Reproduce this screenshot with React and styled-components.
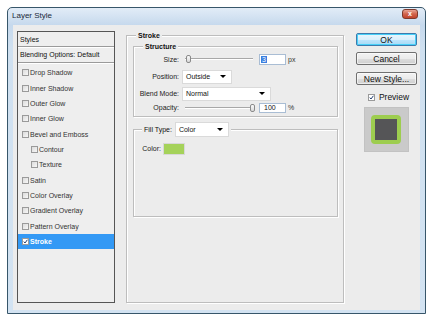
import styled, { createGlobalStyle } from 'styled-components'

const GlobalStyle = createGlobalStyle`
  html, body { margin: 0; padding: 0; background: #fff; }
  body { font-family: "Liberation Sans", Arial, sans-serif; color: #111; }
  * { box-sizing: border-box; }
`

const BG = '#ececec'

const Window = styled.div`
  margin: 7px 0 0 7px;
  width: 419px;
  height: 307px;
  border: 1px solid #37566a;
  border-radius: 5px 5px 0 0;
  padding: 0 5px 3px;
  background: linear-gradient(#e2ecf7, #c6d9ed 17px, #cfe0f0 40px, #d3e3f2);
  display: flex;
  flex-direction: column;
`

const TitleBar = styled.div`
  height: 17px;
  display: flex;
  align-items: flex-start;
  justify-content: space-between;
  flex-shrink: 0;
`

const Title = styled.div`
  margin: 4px 0 0 -1px;
  font-size: 8px;
  line-height: 8px;
  color: #1b2a3a;
`

const CloseBtn = styled.div`
  margin: 1px 2px 0 0;
  width: 16px;
  height: 10px;
  border: 1px solid #7e3a2c;
  border-radius: 3px;
  background: linear-gradient(#e9a494, #d1644c 50%, #c2432c);
  color: #fff;
  font-size: 7px;
  font-weight: bold;
  line-height: 8px;
  text-align: center;
`

const Client = styled.div`
  flex: 1;
  background: ${BG};
  display: flex;
  align-items: flex-start;
  padding: 6px 3px 0 4px;
`

const ListBox = styled.div`
  width: 98px;
  height: 272px;
  border: 1px solid #555;
  background: #eeeeee;
  display: flex;
  flex-direction: column;
  font-size: 7px;
`

const HeaderRow = styled.div`
  height: ${p => p.h}px;
  flex-shrink: 0;
  display: flex;
  align-items: center;
  padding-left: 2px;
  border-bottom: 1px solid #9a9a9a;
  box-shadow: 0 1px 0 #fff;
`

const Items = styled.div`
  margin-top: 2px;
  display: flex;
  flex-direction: column;
`

const Item = styled.div`
  height: 15.36px;
  display: flex;
  align-items: center;
  gap: 1px;
  padding-left: ${p => (p.indent ? 13 : 4)}px;
  background: ${p => (p.selected ? '#3399f5' : 'transparent')};
  color: ${p => (p.selected ? '#fff' : '#333')};
  font-weight: ${p => (p.selected ? 'bold' : 'normal')};
`

const Box = styled.span`
  width: ${p => p.size}px;
  height: ${p => p.size}px;
  flex-shrink: 0;
  border: 1px solid #9a9a9a;
  background: ${p => (p.checked ? '#fff' : 'linear-gradient(135deg, #dcdcdc, #f7f7f7)')};
  display: flex;
  align-items: center;
  justify-content: center;
`

function CheckBox({ checked, size = 7 }) {
  return (
    <Box checked={checked} size={size}>
      {checked && (
        <svg width={size - 2} height={size - 2} viewBox="0 0 10 10">
          <path d="M1.5 5.2 L4 8 L8.8 1.5" fill="none" stroke="#233e70" strokeWidth="2" />
        </svg>
      )}
    </Box>
  )
}

const Group = styled.fieldset`
  margin: ${p => p.m || '0'};
  padding: ${p => p.pad || '0'};
  height: ${p => (p.h ? `${p.h}px` : 'auto')};
  width: ${p => (p.w ? `${p.w}px` : 'auto')};
  border: 1px solid #bdbdbd;
  box-shadow: inset 1px 1px 0 #fff, 1px 1px 0 #fff;
  min-inline-size: 0;
  flex-shrink: 0;
`

const Legend = styled.legend`
  margin-left: ${p => p.ml}px;
  padding: 0 2px;
  background: ${BG};
  font-size: 7px;
  line-height: 9px;
  font-weight: ${p => (p.bold ? 'bold' : 'normal')};
  display: flex;
  align-items: center;
  gap: 3px;
`

const Row = styled.div`
  height: ${p => p.h}px;
  margin-top: ${p => p.mt}px;
  display: flex;
  align-items: center;
  font-size: 7px;
`

const Label = styled.span`
  width: ${p => p.w}px;
  text-align: right;
  flex-shrink: 0;
  color: #222;
`

const SliderTrack = styled.div`
  position: relative;
  margin-left: 6px;
  width: 70px;
  height: 10px;
  &::before {
    content: '';
    position: absolute;
    left: 0;
    right: 2px;
    top: 4px;
    height: 1px;
    background: #a8a8a8;
    box-shadow: 0 1px 0 #fff;
  }
`

const Thumb = styled.span`
  position: absolute;
  top: 1px;
  left: ${p => p.left}px;
  width: 5px;
  height: 8px;
  border: 1px solid #8a8a8a;
  border-radius: 2px;
  background: linear-gradient(#fafafa, #d8d8d8);
`

const NumInput = styled.div`
  margin-left: 4px;
  width: 27px;
  height: ${p => p.h}px;
  border: 1px solid #a9bdd4;
  background: #fff;
  display: flex;
  align-items: center;
  padding-left: ${p => p.pl}px;
  font-size: 7px;
`

const Sel = styled.span`
  background: #3b7fe0;
  color: #fff;
  padding: 0 1px;
`

const Unit = styled.span`
  margin-left: 2px;
  font-size: 7px;
  color: #333;
`

const Select = styled.div`
  margin-left: ${p => p.ml}px;
  width: ${p => p.w}px;
  height: ${p => p.h}px;
  background: #fff;
  border: 1px solid #dadada;
  display: flex;
  align-items: center;
  justify-content: space-between;
  padding: 0 5px 0 3px;
  font-size: 7px;
  font-weight: normal;
  &::after {
    content: '';
    border-left: 3px solid transparent;
    border-right: 3px solid transparent;
    border-top: 3px solid #000;
  }
`

const Swatch = styled.div`
  margin-left: 2px;
  width: 22px;
  height: 12px;
  background: ${p => p.color};
  border: 1px solid #d8d8d8;
`

const Side = styled.div`
  margin-left: 12px;
  padding-top: 2px;
  width: 61px;
  display: flex;
  flex-direction: column;
  align-items: center;
`

const Button = styled.div`
  width: 61px;
  height: 13px;
  margin-top: ${p => p.mt}px;
  border: 1px solid ${p => (p.primary ? '#3d7bad' : '#707070')};
  border-radius: 2px;
  background: ${p =>
    p.primary
      ? 'linear-gradient(#eaf6fd, #d9f0fc 50%, #bee6fd 51%, #a7d9f5)'
      : 'linear-gradient(#f2f2f2, #ebebeb 50%, #dddddd 51%, #cfcfcf)'};
  box-shadow: inset 0 0 0 1px ${p => (p.primary ? '#48d0f8' : 'rgba(255,255,255,0.6)')};
  display: flex;
  align-items: center;
  justify-content: center;
  font-size: 8.5px;
  color: #111;
`

const PreviewRow = styled.div`
  margin-top: 6px;
  height: 12px;
  display: flex;
  align-items: center;
  gap: 4px;
  font-size: 8.5px;
  padding-left: 4px;
`

const PreviewBox = styled.div`
  margin-top: 4px;
  margin-left: -1px;
  width: 45px;
  height: 45px;
  background: #cacaca;
  border: 1px solid #c2c2c2;
  display: flex;
  align-items: center;
  justify-content: center;
`

const PreviewShape = styled.div`
  width: 30px;
  height: 29px;
  border-radius: 4px;
  border: 4px solid #9dcd4f;
  background: #555557;
`

const LAYERS = [
  { label: 'Drop Shadow' },
  { label: 'Inner Shadow' },
  { label: 'Outer Glow' },
  { label: 'Inner Glow' },
  { label: 'Bevel and Emboss' },
  { label: 'Contour', indent: true },
  { label: 'Texture', indent: true },
  { label: 'Satin' },
  { label: 'Color Overlay' },
  { label: 'Gradient Overlay' },
  { label: 'Pattern Overlay' },
  { label: 'Stroke', checked: true, selected: true },
]

export default function App() {
  return (
    <>
      <GlobalStyle />
      <Window>
        <TitleBar>
          <Title>Layer Style</Title>
          <CloseBtn>x</CloseBtn>
        </TitleBar>
        <Client>
          <ListBox>
            <HeaderRow h={15}>Styles</HeaderRow>
            <HeaderRow h={16}>Blending Options: Default</HeaderRow>
            <Items>
              {LAYERS.map(l => (
                <Item key={l.label} indent={l.indent} selected={l.selected}>
                  <CheckBox checked={l.checked} />
                  <span>{l.label}</span>
                </Item>
              ))}
            </Items>
          </ListBox>

          <Group m="0 0 0 11px" pad="2px 5px 0 6px" w={218} h={272}>
            <Legend ml={3} bold>Stroke</Legend>
            <Group pad="0 0 3px 0">
              <Legend ml={9} bold>Structure</Legend>
              <Row h={12} mt={2}>
                <Label w={45}>Size:</Label>
                <SliderTrack>
                  <Thumb left={1} />
                </SliderTrack>
                <NumInput h={11} pl={1}><Sel>3</Sel></NumInput>
                <Unit>px</Unit>
              </Row>
              <Row h={15} mt={4}>
                <Label w={45}>Position:</Label>
                <Select ml={3} w={50} h={14}>Outside</Select>
              </Row>
              <Row h={15} mt={2}>
                <Label w={45}>Blend Mode:</Label>
                <Select ml={3} w={89} h={14}>Normal</Select>
              </Row>
              <Row h={11} mt={1}>
                <Label w={45}>Opacity:</Label>
                <SliderTrack>
                  <Thumb left={65} />
                </SliderTrack>
                <NumInput h={10} pl={4}>100</NumInput>
                <Unit>%</Unit>
              </Row>
            </Group>
            <Group m="5px 0 0 0" h={95}>
              <Legend ml={8}>
                Fill Type:
                <Select ml={0} w={54} h={15}>Color</Select>
              </Legend>
              <Row h={13} mt={5}>
                <Label w={27}>Color:</Label>
                <Swatch color="#a5d25a" />
              </Row>
            </Group>
          </Group>

          <Side>
            <Button primary mt={0}>OK</Button>
            <Button mt={6}>Cancel</Button>
            <Button mt={7}>New Style...</Button>
            <PreviewRow>
              <CheckBox checked size={7} />
              <span>Preview</span>
            </PreviewRow>
            <PreviewBox>
              <PreviewShape />
            </PreviewBox>
          </Side>
        </Client>
      </Window>
    </>
  )
}
